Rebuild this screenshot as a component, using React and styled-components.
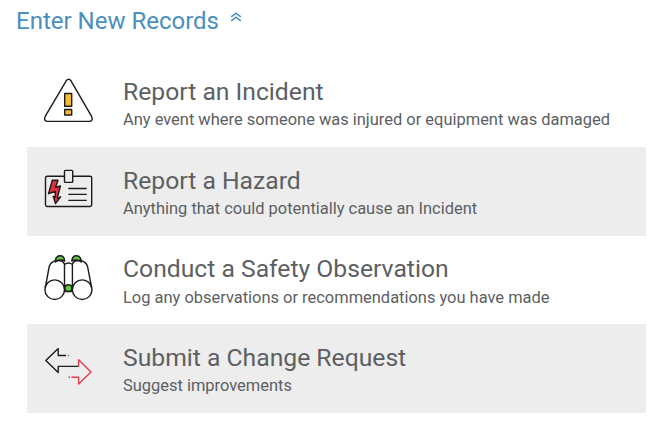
import React from "react";
import styled, { createGlobalStyle } from "styled-components";

const GlobalStyle = createGlobalStyle`
  * { box-sizing: border-box; }
  body { margin: 0; background: #fff; font-family: Roboto, sans-serif; }
`;

const Page = styled.main`
  width: 662px;
  height: 423px;
  overflow: hidden;
  background: #fff;
`;

const Header = styled.header`
  display: flex;
  align-items: center;
  height: 41px;
  padding-left: 16px;
  gap: 12px;
  color: #4a8fbd;
`;

const Title = styled.h1`
  margin: 0;
  font-size: 24px;
  line-height: 28px;
  font-weight: 400;
  white-space: nowrap;
`;

const Chevron = styled.svg`
  display: block;
  width: 12px;
  height: 10px;
  margin: -7px 0 0 -1px;
  fill: none;
  stroke: currentColor;
  stroke-width: 1.6;
`;

const List = styled.ul`
  display: grid;
  grid-template-rows: 88px 89px 88px 89px;
  width: 619px;
  margin: 18px 0 0 27px;
  padding: 0;
  list-style: none;
`;

const Row = styled.li`
  display: flex;
  gap: 21px;
  padding: 11px 0 0 9px;
  background: ${(p) => (p.$shaded ? "#ededed" : "#fff")};
`;

const Icon = styled.svg`
  flex: none;
  width: 66px;
  height: 64px;
  fill: none;
  stroke: #1c1c1c;
  stroke-width: 1.4;
  stroke-linejoin: round;
`;

const Copy = styled.div`
  padding-top: ${(p) => (p.$shaded ? 9 : 8)}px;
  white-space: nowrap;
`;

const Name = styled.h2`
  margin: 0;
  color: #5c6063;
  font-size: 24.7px;
  line-height: 28px;
  font-weight: 400;
`;

const Description = styled.p`
  margin: ${(p) => p.$gap}px 0 0;
  color: #5c6063;
  font-size: 16.44px;
  line-height: 20px;
`;

const WarningIcon = () => (
  <Icon viewBox="0 0 66 64">
    <path d="M30.2 10.8 9.2 46.4Q7.2 51.2 12 51.4H52.8Q57.6 51.2 55.6 46.4L35 10.8Q32.6 7.8 30.2 10.8Z" />
    <path fill="#f8bd2d" d="M28.7 23.5H35.7V36.2H28.7ZM28.7 39.5H35.7V45H28.7Z" />
  </Icon>
);

const HazardIcon = () => (
  <Icon viewBox="0 -2 66 64">
    <path d="M28.5 16.3H11.2Q9.5 16.3 9.5 18V44.8Q9.5 46.5 11.2 46.5H54Q55.7 46.5 55.7 44.8V18Q55.7 16.3 54 16.3H37" />
    <rect x="28.5" y="10.4" width="8.2" height="12" rx="0.8" />
    <path d="M32.3 28.5H50.7M32.3 34.4H50.7M32.3 40.4H50.7" />
    <path fill="#e12f3c" d="M16.3 20.3H22L19.6 27.2 24.4 26 21.3 38.2 24.6 36.8 19.5 43.6 17.2 36.3 19.2 37.2 19.3 31.5 12.5 33.7Z" />
  </Icon>
);

const BinocularsIcon = () => (
  <Icon viewBox="0 -1 66 64">
    <path fill="#62c744" d="M19.2 14C19.5 6 28 5.8 28.7 13Q23.5 10.5 19.2 14ZM45.3 14C45 6 36.5 5.8 35.8 13Q41 10.5 45.3 14Z" />
    <path d="M9.3 39.5 13.3 18.2Q15 13.3 21 12.5 27.6 12.3 28.5 16.5V39M55.6 39.5 51.5 18.2Q49.8 13.3 44 12.5 37.2 12.3 36.4 16.5V39M28.5 16.5Q32.5 13.5 36.4 16.5" />
    <circle cx="18.7" cy="41.7" r="9.8" />
    <circle cx="46.2" cy="41.7" r="9.8" />
    <circle cx="32.4" cy="40.2" r="3.4" fill="#62c744" />
    <path d="M28.3 43.5H36.6" />
  </Icon>
);

const ChangeIcon = () => (
  <Icon viewBox="0 -1 66 64">
    <path d="M30 19.5H22.2V12.6L9.8 24.6 22.2 36.4V30.4H42.5" />
    <path stroke="#999" d="M31.3 19.5H33.5" />
    <path stroke="#e13f49" d="M42.6 30.4V23.8L55 36 42.6 48V41.2H35.5M34 41.2H32.5" />
  </Icon>
);

const records = [
  { name: "Report an Incident", text: "Any event where someone was injured or equipment was damaged", Glyph: WarningIcon, gap: 4 },
  { name: "Report a Hazard", text: "Anything that could potentially cause an Incident", Glyph: HazardIcon, gap: 4 },
  { name: "Conduct a Safety Observation", text: "Log any observations or recommendations you have made", Glyph: BinocularsIcon, gap: 5 },
  { name: "Submit a Change Request", text: "Suggest improvements", Glyph: ChangeIcon, gap: 4 },
];

export default function App() {
  return (
    <Page>
      <GlobalStyle />
      <Header>
        <Title>Enter New Records</Title>
        <Chevron viewBox="0 0 12 10">
          <path d="M1.2 4.8 6 1.2 10.8 4.8M1.2 8.8 6 5.2 10.8 8.8" />
        </Chevron>
      </Header>
      <List>
        {records.map(({ name, text, Glyph, gap }, i) => (
          <Row key={name} $shaded={i % 2 === 1}>
            <Glyph />
            <Copy $shaded={i % 2 === 1}>
              <Name>{name}</Name>
              <Description $gap={gap}>{text}</Description>
            </Copy>
          </Row>
        ))}
      </List>
    </Page>
  );
}
